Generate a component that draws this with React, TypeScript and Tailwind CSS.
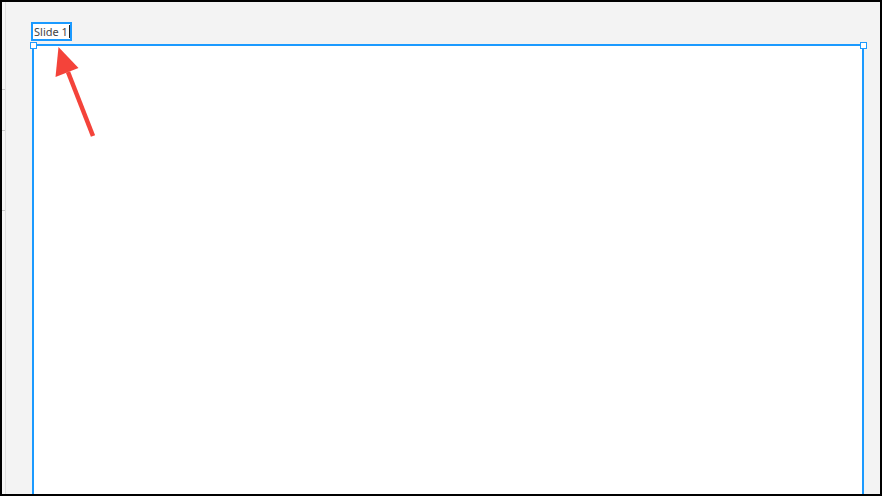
import React from 'react';

const BLUE = '#1b9aff';

const Handle: React.FC<{ className: string }> = ({ className }) => (
  <div className={`absolute w-[7px] h-[7px] bg-white border border-[#1b9aff] ${className}`} />
);

export default function App() {
  return (
    <div
      className="relative w-[882px] h-[496px] bg-black p-[2px] overflow-hidden"
      style={{ fontFamily: '"Noto Sans", "Liberation Sans", sans-serif' }}
    >
      <div className="flex w-full h-full">
        {/* ruler strip */}
        <div className="relative w-[3px] h-full bg-[#f6f6f6] border-r border-[#e0e0e0] box-content">
          <div className="absolute left-0 top-[87px] w-[3px] h-px bg-[#c8c8c8]" />
          <div className="absolute left-0 top-[128px] w-[3px] h-px bg-[#c8c8c8]" />
          <div className="absolute left-0 top-[208px] w-[3px] h-px bg-[#c8c8c8]" />
        </div>

        {/* canvas */}
        <div className="flex-1 flex flex-col bg-[#f3f3f3] pl-[25px] pt-[20px] overflow-hidden">
          <div className="flex items-center w-[41px] h-[19px] border-2 border-[#1b9aff] bg-white pl-[1px] text-[11px] leading-none text-[#444]">
            <span>Slide 1</span>
            <span className="ml-px w-px h-[13px] bg-[#222]" />
          </div>
          <div className="relative mt-[3px] ml-[1px] w-[832px] flex-1 bg-white border-2 border-[#1b9aff] border-b-0">
            <Handle className="-left-[4.5px] -top-[4px]" />
            <Handle className="-right-[4.5px] -top-[4px]" />
          </div>
        </div>
      </div>

      {/* annotation arrow */}
      <svg
        className="absolute left-0 top-0 pointer-events-none"
        width={882}
        height={496}
        viewBox="0 0 882 496"
      >
        <line x1={68} y1={72} x2={93} y2={136} stroke="#f4433a" strokeWidth={4.5} />
        <polygon points="58.5,47 55.5,77 78.5,68" fill="#f4433a" />
      </svg>
      <span className="hidden" style={{ color: BLUE }} />
    </div>
  );
}
